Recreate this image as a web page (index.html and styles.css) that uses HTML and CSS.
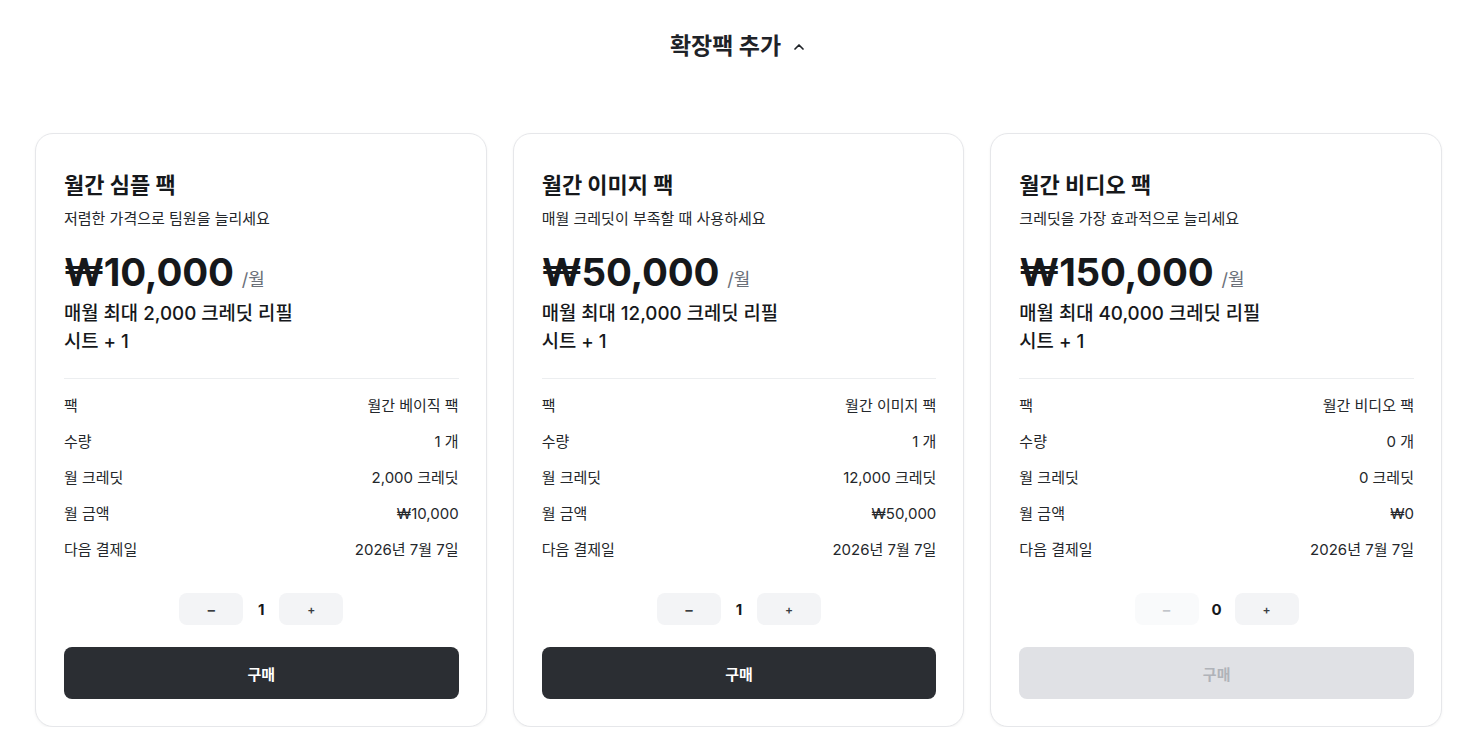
FILE: index.html
```html
<!DOCTYPE html>
<html lang="ko">
<head>
<meta charset="utf-8">
<title>확장팩 추가</title>
<link rel="stylesheet" href="styles.css">
</head>
<body>
<div class="page">
  <div class="header">
    <h2 class="header-title">확장팩 추가</h2>
    <svg class="chevron" width="16" height="16" viewBox="0 0 24 24" fill="none" stroke="#1f2328" stroke-width="2.6" stroke-linecap="round" stroke-linejoin="round"><path d="M6 15l6-6 6 6"/></svg>
  </div>
  <div class="cards">
    <div class="card">
      <h3 class="card-title">월간 심플 팩</h3>
      <p class="card-sub">저렴한 가격으로 팀원을 늘리세요</p>
      <div class="price"><span class="amount">₩10,000</span><span class="per">/월</span></div>
      <div class="features"><div>매월 최대 2,000 크레딧 리필</div><div>시트 + 1</div></div>
      <div class="divider"></div>
      <div class="rows">
        <div class="row"><span>팩</span><span>월간 베이직 팩</span></div>
        <div class="row"><span>수량</span><span>1 개</span></div>
        <div class="row"><span>월 크레딧</span><span>2,000 크레딧</span></div>
        <div class="row"><span>월 금액</span><span>₩10,000</span></div>
        <div class="row"><span>다음 결제일</span><span>2026년 7월 7일</span></div>
      </div>
      <div class="stepper"><button class="step minus">−</button><span class="count">1</span><button class="step plus">+</button></div>
      <button class="buy">구매</button>
    </div>
    <div class="card">
      <h3 class="card-title">월간 이미지 팩</h3>
      <p class="card-sub">매월 크레딧이 부족할 때 사용하세요</p>
      <div class="price"><span class="amount">₩50,000</span><span class="per">/월</span></div>
      <div class="features"><div>매월 최대 12,000 크레딧 리필</div><div>시트 + 1</div></div>
      <div class="divider"></div>
      <div class="rows">
        <div class="row"><span>팩</span><span>월간 이미지 팩</span></div>
        <div class="row"><span>수량</span><span>1 개</span></div>
        <div class="row"><span>월 크레딧</span><span>12,000 크레딧</span></div>
        <div class="row"><span>월 금액</span><span>₩50,000</span></div>
        <div class="row"><span>다음 결제일</span><span>2026년 7월 7일</span></div>
      </div>
      <div class="stepper"><button class="step minus">−</button><span class="count">1</span><button class="step plus">+</button></div>
      <button class="buy">구매</button>
    </div>
    <div class="card">
      <h3 class="card-title">월간 비디오 팩</h3>
      <p class="card-sub">크레딧을 가장 효과적으로 늘리세요</p>
      <div class="price"><span class="amount">₩150,000</span><span class="per">/월</span></div>
      <div class="features"><div>매월 최대 40,000 크레딧 리필</div><div>시트 + 1</div></div>
      <div class="divider"></div>
      <div class="rows">
        <div class="row"><span>팩</span><span>월간 비디오 팩</span></div>
        <div class="row"><span>수량</span><span>0 개</span></div>
        <div class="row"><span>월 크레딧</span><span>0 크레딧</span></div>
        <div class="row"><span>월 금액</span><span>₩0</span></div>
        <div class="row"><span>다음 결제일</span><span>2026년 7월 7일</span></div>
      </div>
      <div class="stepper"><button class="step minus disabled">−</button><span class="count">0</span><button class="step plus">+</button></div>
      <button class="buy disabled">구매</button>
    </div>
  </div>
</div>
</body>
</html>
```
FILE: styles.css
```css
* { box-sizing: border-box; }
html, body { margin: 0; padding: 0; background: #fff; }
body {
  font-family: "Inter", "Noto Sans CJK KR", sans-serif;
  color: #16181b;
}
.page { padding: 30px 37px 0 35px; }
.header {
  display: flex;
  align-items: center;
  justify-content: center;
  gap: 10px;
  height: 32px;
}
.header-title {
  margin: 0;
  font-size: 23px;
  font-weight: 700;
  line-height: 32px;
  color: #1f2328;
}
.chevron { display: block; margin-top: 1px; }
.cards {
  display: grid;
  grid-template-columns: repeat(3, 1fr);
  gap: 26px;
  margin-top: 71px;
}
.card {
  border: 1px solid #e6e7ea;
  border-radius: 18px;
  padding: 36px 27px 27px 28px;
  background: #fff;
  box-shadow: 0 1px 3px rgba(0,0,0,0.05);
  display: flex;
  flex-direction: column;
}
.card-title {
  margin: 0;
  font-size: 22px;
  line-height: 30px;
  font-weight: 700;
  color: #16181b;
}
.card-sub {
  margin: 8px 0 0;
  font-size: 15px;
  line-height: 22px;
  color: #24272b;
}
.price {
  display: flex;
  align-items: baseline;
  gap: 8px;
  margin-top: 22px;
  line-height: 40px;
}
.amount {
  font-size: 38.5px;
  font-weight: 700;
  letter-spacing: -0.2px;
  color: #16181b;
}
.per {
  font-size: 18px;
  color: #6b7079;
}
.features {
  font-size: 18.8px;
  line-height: 28px;
  font-weight: 500;
  color: #16181b;
}
.divider {
  height: 1px;
  background: #eceef0;
  margin-top: 22px;
}
.rows {
  display: flex;
  flex-direction: column;
  gap: 16px;
  padding-top: 17px;
}
.row {
  display: flex;
  justify-content: space-between;
  font-size: 15px;
  line-height: 20px;
  color: #24272b;
}
.stepper {
  display: flex;
  align-items: center;
  justify-content: center;
  margin-top: 33px;
}
.step {
  width: 64px;
  height: 32px;
  border: none;
  border-radius: 8px;
  background: #f3f4f6;
  font-family: inherit;
  font-weight: 600;
  color: #3a3d42;
  padding: 0;
}
.step.minus { font-size: 15px; }
.step.plus { font-size: 12px; }
.step.disabled { background: #f9fafb; color: #c2c5ca; }
.count {
  width: 36px;
  text-align: center;
  font-size: 15px;
  font-weight: 700;
  color: #16181b;
}
.buy {
  margin-top: 22px;
  height: 52px;
  border: none;
  border-radius: 8px;
  background: #2b2e33;
  color: #fff;
  font-family: inherit;
  font-size: 15px;
  font-weight: 700;
}
.buy.disabled { background: #e0e1e5; color: #b0b3b9; }
```
